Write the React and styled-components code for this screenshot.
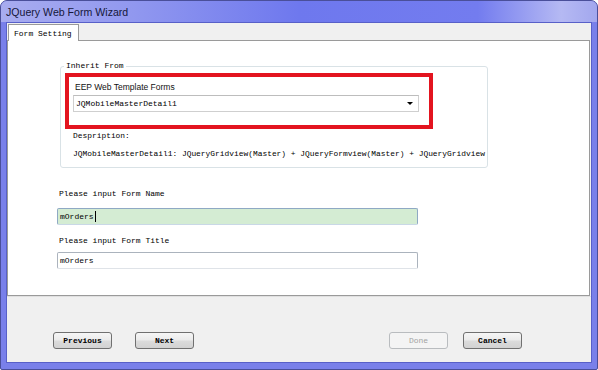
import styled, { createGlobalStyle } from 'styled-components';

const GlobalStyle = createGlobalStyle`
  html, body { margin: 0; padding: 0; background: #ffffff; }
  body { width: 598px; height: 370px; overflow: hidden; }
`;

const mono = `"Liberation Mono", "DejaVu Sans Mono", monospace`;
const sans = `"Liberation Sans", Arial, sans-serif`;

const Window = styled.div`
  width: 598px;
  height: 370px;
  box-sizing: border-box;
  display: flex;
  flex-direction: column;
  border-radius: 7px 7px 2px 2px;
  border: 1px solid #4a4f9a;
  background: #7980ea;
  overflow: hidden;
`;

const TitleBar = styled.div`
  height: 21px;
  flex: none;
  display: flex;
  align-items: center;
  padding-left: 5px;
  background: linear-gradient(90deg, #a8acef 0%, #9198ef 22%, #6e78ee 50%, #737cef 80%, #b5b9f3 94%, #a2a7ee 100%);
  font-family: ${sans};
  font-size: 10.6px;
  color: #15173a;
`;

const Client = styled.div`
  flex: 1;
  display: flex;
  flex-direction: column;
  margin: 0 5px 6px 5px;
  background: #f0f0f0;
  border: 1px solid #5860c8;
`;

const TabStrip = styled.div`
  height: 17px;
  flex: none;
  display: flex;
  align-items: flex-end;
  padding-left: 1px;
  background: #f0f0f0;
  margin-right: 1px;
`;

const Tab = styled.div`
  height: 16px;
  padding: 0 6px 0 5px;
  display: flex;
  align-items: center;
  background: #ffffff;
  border: 1px solid #9a9a9a;
  border-bottom: none;
  font-family: ${mono};
  font-size: 8px;
  color: #000;
  margin-bottom: -1px;
  position: relative;
  z-index: 1;
`;

const Pane = styled.div`
  height: 256px;
  flex: none;
  box-sizing: border-box;
  background: #ffffff;
  border: 1px solid #9a9a9a;
  margin-right: 1px;
  padding: 20px 0 0 49px;
  display: flex;
  flex-direction: column;
`;

const Group = styled.fieldset`
  margin: 0 0 0 3px;
  padding: 0 0 8px 0;
  width: 428px;
  box-sizing: border-box;
  border: 1px solid #d9e2e6;
  border-radius: 3px;
  overflow: hidden;
`;

const Legend = styled.legend`
  margin-left: 3px;
  padding: 0 2px;
  font-family: ${mono};
  font-size: 8px;
  line-height: 10px;
  color: #000;
`;

const Highlight = styled.div`
  margin: 2px 0 0 4px;
  width: 368px;
  height: 56px;
  box-sizing: border-box;
  border: 4px solid #e3141f;
  padding: 5px 0 0 4px;
  display: flex;
  flex-direction: column;
`;

const SmallLabel = styled.div`
  padding-left: 2px;
  font-family: ${sans};
  font-size: 8.5px;
  line-height: 10px;
  color: #111;
`;

const Select = styled.div`
  margin-top: 3px;
  width: 346px;
  height: 17px;
  box-sizing: border-box;
  border: 1px solid #cfcfcf;
  border-top-color: #bdbdbd;
  display: flex;
  align-items: center;
  justify-content: space-between;
  padding: 0 5px 0 2px;
  font-family: ${mono};
  font-size: 8px;
  color: #000;
`;

const Arrow = styled.span`
  width: 0;
  height: 0;
  border-left: 3px solid transparent;
  border-right: 3px solid transparent;
  border-top: 3px solid #000;
`;

const GroupText = styled.div`
  padding-left: 12px;
  margin-top: ${p => p.$top}px;
  font-family: ${mono};
  font-size: 7.9px;
  line-height: 10px;
  color: #000;
  white-space: nowrap;
`;

const FieldLabel = styled.div`
  margin: ${p => p.$top}px 0 0 2px;
  font-family: ${mono};
  font-size: 8px;
  line-height: 10px;
  color: #000;
`;

const Input = styled.div`
  margin-top: ${p => p.$top}px;
  width: 361px;
  height: 17px;
  box-sizing: border-box;
  border: 1px solid ${p => (p.$focused ? '#8fa9c4' : '#abb3bd')};
  border-bottom-color: ${p => (p.$focused ? '#c9d8e6' : '#dfe3e8')};
  border-radius: 2px;
  background: ${p => (p.$focused ? '#d4ecd3' : '#ffffff')};
  display: flex;
  align-items: center;
  padding-left: 2px;
  font-family: ${mono};
  font-size: 8px;
  color: #000;
`;

const Caret = styled.span`
  display: inline-block;
  width: 1px;
  height: 11px;
  background: #000;
  margin-left: 1px;
`;

const Footer = styled.div`
  flex: 1;
  display: flex;
  align-items: flex-start;
  padding: 35px 69px 0 46px;
  border-top: 1px solid #e0e0e0;
`;

const Button = styled.div`
  width: 59px;
  height: 17px;
  box-sizing: border-box;
  display: flex;
  align-items: center;
  justify-content: center;
  margin-left: ${p => p.$gap || 0}px;
  border: 1px solid ${p => (p.$disabled ? '#b9bcbf' : '#707070')};
  border-radius: 3px;
  background: ${p => (p.$disabled
    ? '#f4f4f4'
    : 'linear-gradient(180deg, #f6f6f6 0%, #ebebeb 48%, #dcdcdc 52%, #d2d2d2 100%)')};
  font-family: ${mono};
  font-size: 8px;
  font-weight: ${p => (p.$disabled ? 'normal' : 'bold')};
  color: ${p => (p.$disabled ? '#a3a3a3' : '#000')};
`;

const Spacer = styled.div`
  flex: 1;
`;

export default function App() {
  return (
    <>
      <GlobalStyle />
      <Window>
        <TitleBar>JQuery Web Form Wizard</TitleBar>
        <Client>
          <TabStrip>
            <Tab>Form Setting</Tab>
          </TabStrip>
          <Pane>
            <Group>
              <Legend>Inherit From</Legend>
              <Highlight>
                <SmallLabel>EEP Web Template Forms</SmallLabel>
                <Select>
                  <span>JQMobileMasterDetail1</span>
                  <Arrow />
                </Select>
              </Highlight>
              <GroupText $top={2}>Despription:</GroupText>
              <GroupText $top={8}>
                JQMobileMasterDetail1: JQueryGridview(Master) + JQueryFormview(Master) + JQueryGridview
              </GroupText>
            </Group>
            <FieldLabel $top={21}>Please input Form Name</FieldLabel>
            <Input $top={9} $focused>
              mOrders<Caret />
            </Input>
            <FieldLabel $top={11}>Please input Form Title</FieldLabel>
            <Input $top={6}>mOrders</Input>
          </Pane>
          <Footer>
            <Button>Previous</Button>
            <Button $gap={23}>Next</Button>
            <Spacer />
            <Button $disabled>Done</Button>
            <Button $gap={15}>Cancel</Button>
          </Footer>
        </Client>
      </Window>
    </>
  );
}
